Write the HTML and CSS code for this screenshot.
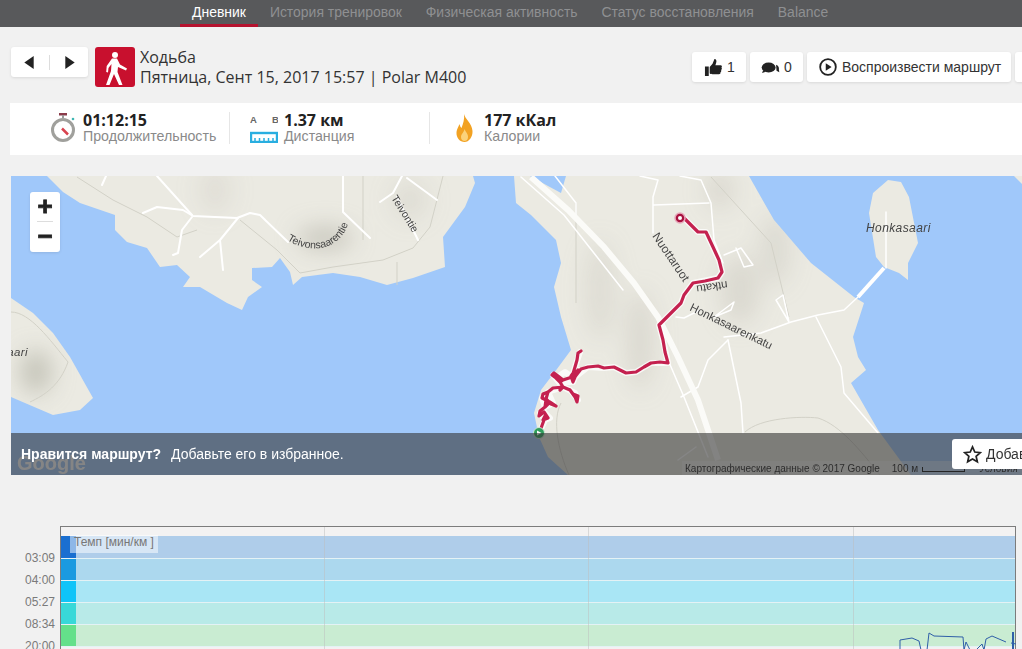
FILE: index.html
```html
<!DOCTYPE html>
<html lang="ru">
<head>
<meta charset="utf-8">
<title>Ходьба</title>
<link rel="stylesheet" href="styles.css">
</head>
<body>
<nav class="tabs">
  <a class="tab active">Дневник</a>
  <a class="tab">История тренировок</a>
  <a class="tab">Физическая активность</a>
  <a class="tab">Статус восстановления</a>
  <a class="tab">Balance</a>
</nav>

<header class="head">
  <div class="pager card">
    <svg class="pager-ico" viewBox="0 0 12 16"><path d="M11 1v14L1 8z"/></svg>
    <span class="pager-sep"></span>
    <svg class="pager-ico" viewBox="0 0 12 16"><path d="M1 1v14l10-7z"/></svg>
  </div>
  <div class="sport">
    <svg viewBox="0 0 40 40" width="40" height="40">
      <circle cx="20" cy="8" r="3" fill="#fff"/>
      <path fill="#fff" d="M17 11.500h5l3 6 7 4-1 2-8-3.500-.5 5 5 13h-3.500l-5-11-4.500 11h-3.500l5-14 .5-7-3 4-.5 4.500-1.800-.5.5-6z"/>
    </svg>
  </div>
  <div class="title">
    <div class="title-main">Ходьба</div>
    <div class="title-sub">Пятница, Сент 15, 2017 15:57 | Polar M400</div>
  </div>
  <div class="actions">
    <button class="card btn btn-like">
      <svg viewBox="0 0 20 20" width="19" height="19"><path fill="#222" d="M1 9h4v10H1zM6 9.500l3-3.500 2-5c2 0 2.500 2 1.800 4l-.8 2.500h5.500c1.500 0 1.800 2 .8 2.600.8.800.6 2-.3 2.500.5 1 .1 2-.7 2.400.3 1.200-.4 2-1.500 2H9c-1.500 0-3-.5-3-1z"/></svg>
      <span>1</span>
    </button>
    <button class="card btn btn-comment">
      <svg viewBox="0 0 20 14" width="19" height="13"><ellipse cx="8" cy="7" rx="7.500" ry="5.500" fill="#222"/><path fill="#222" d="M2 10l-1 3 4-1.500zM16 4c2.500 1 3.500 3 3 5l.5 3-3-1.500z"/></svg>
      <span>0</span>
    </button>
    <button class="card btn btn-play">
      <svg viewBox="0 0 20 20" width="18" height="18"><circle cx="10" cy="10" r="8.700" fill="none" stroke="#222" stroke-width="2"/><path fill="#222" d="M7.500 5.800v8.400L14 10z"/></svg>
      <span>Воспроизвести маршрут</span>
    </button>
    <button class="card btn btn-more"></button>
  </div>
</header>

<section class="summary">
  <div class="stat">
    <svg class="stat-ico" viewBox="0 0 28 30" width="28" height="30">
      <rect x="9" y="0" width="8" height="2.500" fill="#8a3b4a"/>
      <rect x="12" y="2" width="2" height="3" fill="#9a9a9a"/>
      <circle cx="13" cy="17" r="10.500" fill="#fff" stroke="#a0a09c" stroke-width="3"/>
      <path d="M12 15.500l6 6" stroke="#d8434e" stroke-width="2.500"/>
      <circle cx="23" cy="6" r="1.300" fill="#3fb6b2"/>
    </svg>
    <div><div class="stat-val">01:12:15</div><div class="stat-lbl">Продолжительность</div></div>
  </div>
  <div class="stat">
    <svg class="stat-ico" viewBox="0 0 28 30" width="28" height="30">
      <text x="0" y="10" class="ab">A</text>
      <text x="22" y="10" class="ab">B</text>
      <rect x="1" y="20" width="26" height="9" fill="#fff" stroke="#29aee0" stroke-width="2.400"/>
      <path d="M5 29v-4M9.500 29v-4M14 29v-4M18.500 29v-4M23 29v-4" stroke="#29aee0" stroke-width="1.500"/>
    </svg>
    <div><div class="stat-val">1.37 км</div><div class="stat-lbl">Дистанция</div></div>
  </div>
  <div class="stat">
    <svg class="stat-ico" viewBox="0 0 28 30" width="28" height="30">
      <path fill="#f2a223" d="M13 1c1 5 8 9 8.500 17 .3 6-3.500 11-8 11s-8.500-4-8-10c.3-3 2-5 3-8 .5 2 1 3 2 4 1.500-4 3.200-9 2.500-14z"/>
      <path fill="#fbd27a" d="M13.500 16c1 3 3.500 4.500 3.500 8 0 2.500-1.500 4-3.500 4s-3.500-1.500-3.500-4c0-3 3-4.500 3.500-8z"/>
    </svg>
    <div><div class="stat-val">177 кКал</div><div class="stat-lbl">Калории</div></div>
  </div>
</section>

<section class="map">
  <svg class="map-art" viewBox="11 176 1011 299" width="1011" height="299">
    <defs>
      <filter id="blur" x="-60%" y="-60%" width="220%" height="220%"><feGaussianBlur stdDeviation="11"/></filter>
      <clipPath id="landclip">
        <path d="M47 176L63 192 80 203 115 215 115 230 127 242 147 248 160 267 177 265 190 277 183 287 200 287 227 303 242 310 248 297 262 287 252 280 252 268 272 267 280 258 290 272 293 285 302 277 333 273 360 277 387 285 413 278 445 267 443 237 465 207 475 183 473 176Z"/>
        <path d="M11 298L33 313 53 333 70 357 93 398 80 410 53 415 11 397Z"/>
        <path d="M514 176L516 203 531 215 556 240 561 263 554 287 561 317 571 350 554 373 541 390 534 413 539 437 548 457 568 475H911L878 430 851 383 866 370 858 357 853 337 864 303 854 297 811 263 774 220 749 176Z"/>
      </clipPath>
    </defs>
    <rect x="11" y="176" width="1011" height="299" fill="#a0c8fa"/>
    <g fill="#ebeae2">
      <path d="M47 176L63 192 80 203 115 215 115 230 127 242 147 248 160 267 177 265 190 277 183 287 200 287 227 303 242 310 248 297 262 287 252 280 252 268 272 267 280 258 290 272 293 285 302 277 333 273 360 277 387 285 413 278 445 267 443 237 465 207 475 183 473 176Z"/>
      <path d="M11 298L33 313 53 333 70 357 93 398 80 410 53 415 11 397Z"/>
      <path d="M514 176L516 203 531 215 556 240 561 263 554 287 561 317 571 350 554 373 541 390 534 413 539 437 548 457 568 475H911L878 430 851 383 866 370 858 357 853 337 864 303 854 297 811 263 774 220 749 176Z"/>
      <path d="M888 180L873 193 869 213 876 257 884 267 899 273 908 280 908 263 918 243 909 197 901 182Z"/>
      <path d="M1014 176H1022V184Z"/>
    </g>
    <path d="M530 176H566L561 193 548 186Z" fill="#a0c8fa"/>
    <g clip-path="url(#landclip)">
      <g filter="url(#blur)" fill="#c2c1b6">
        <ellipse cx="36" cy="372" rx="16" ry="22" opacity=".9"/>
        <ellipse cx="325" cy="238" rx="28" ry="12" opacity=".8"/>
        <ellipse cx="215" cy="190" rx="16" ry="24" opacity=".25"/>
        <ellipse cx="410" cy="200" rx="18" ry="20" opacity=".3"/>
        <ellipse cx="640" cy="340" rx="14" ry="50" opacity=".4"/>
        <ellipse cx="600" cy="290" rx="16" ry="50" opacity=".3"/>
        <ellipse cx="740" cy="290" rx="20" ry="35" opacity=".4"/>
        <ellipse cx="775" cy="250" rx="16" ry="36" opacity=".35"/>
        <ellipse cx="720" cy="190" rx="14" ry="20" opacity=".4"/>
      </g>
    </g>
    <g class="thin">
      <path d="M77 177L113 200 147 217 177 237 197 230"/>
      <path d="M240 220L277 250 300 273 333 267 383 260 413 248 430 227 443 176"/>
      <path d="M363 176V240M397 262V285"/>
      <path d="M11 312C30 312 50 340 68 362 60 385 45 395 30 402"/>
      <path d="M576 203V303M711 177L771 243 789 317"/>
      <path d="M561 403C552 420 558 450 569 475"/>
      <path d="M745 432C760 418 800 416 818 418 840 425 860 450 880 475"/>
    </g>
    <g class="road">
      <path d="M143 213L157 207 183 210 193 216 237 218 250 213 260 215 288 242"/>
      <path d="M157 176L192 215M192 217L182 230 178 253 173 255"/>
      <path d="M238 218L220 240 200 257M220 240L223 270"/>
      <path d="M343 176V212L370 238M402 176L393 193 380 202M407 178L437 200M397 197L418 240M106 176L102 185"/>
    </g>
    <g class="road road-sm">
      <path d="M521 177L564 215 623 290"/>
      <path d="M658 180L653 197V233M654 205L709 203M640 176L658 180M680 176L701 180 711 203 714 240 723 263"/>
      <path d="M724 255L741 248 753 265 744 267 736 248"/>
      <path d="M676 317L684 318 700 310M714 317L734 302 731 310 714 317"/>
      <path d="M789 322L776 300 783 295 789 322"/>
      <path d="M724 337L761 333 791 322 818 315 844 310 858 297"/>
      <path d="M886 268V212"/>
      <path d="M728 340L708 360 698 387 681 397"/>
      <path d="M728 340L741 403 743 433"/>
      <path d="M816 317L841 367 844 393 878 433"/>
      <path d="M668 360L684 397 708 457"/>
      <path d="M678 460L696 447"/>
      <path d="M555 176L576 203 576 215"/>
    </g>
    <path class="causeway" d="M858 297L884 268"/>
    <path class="highway" d="M531 177L568 210 604 247 634 283 658 317 678 357 698 400 718 460"/>
    <g class="lbl">
      <path id="teiv" d="M287 240C312 256 346 250 350 214" fill="none"/>
      <text font-size="10.500"><textPath href="#teiv">Teivonsaarentie</textPath></text>
      <text transform="translate(391 198) rotate(58)" font-size="10.500">Teivontie</text>
      <text transform="translate(652 236) rotate(56)" font-size="12">Nuottaruot</text>
      <text transform="translate(727 281) rotate(172)" font-size="11.500">ntkatu</text>
      <text transform="translate(689 310) rotate(26)" font-size="11.500">Honkasaarenkatu</text>
      <text x="866" y="232" font-size="12" font-style="italic" letter-spacing=".4">Honkasaari</text>
      <text x="28" y="356" font-size="11.500" font-style="italic" text-anchor="end" letter-spacing=".4">nsaari</text>
    </g>
    <path class="route-halo" d="M684 218L698 232 706 232 719 260 722 272 718 278 693 283 684 295 681 303 659 325 663 340 668 363 651 363 636 372 626 373 614 367 604 368 588 367 574 378M580 352L575 367 572 377 578 370 573 382 560 382 553 375 563 387 570 390 578 400 575 393 563 387 548 392 542 398 545 407 553 403 548 392M545 407L540 413 545 420 550 418 544 412M545 420L540 431M556 378L565 372 572 377"/>
    <path class="route" d="M684 218L690 224 698 232 706 232 713 247 719 260 722 272 718 278 705 281 693 283 687 291 684 295 681 303 659 325 663 340 665 352 668 363 660 362 651 363 644 367 636 372 626 373 620 370 614 367 604 368 598 366 588 367 581 369 574 378M581 351L578 353 577 360 575 367 572 377 578 370 573 382 571 376 574 372M560 382L556 378 552 375 554 373 558 376 563 380 560 382 563 387 560 390M563 387L570 390 573 394 578 396 577 402 575 397 570 390M563 380L572 377M563 387L553 388 548 392 543 394 542 398 546 400 545 407 550 402 556 406 551 404 546 399 548 392M545 407L540 411 539 416 544 412 548 418 543 420 545 416M544 420L540 431"/>
    <circle cx="680" cy="218" r="5" fill="#a8123f" stroke="#e7a8bb" stroke-width="1.500"/>
    <circle cx="680" cy="218" r="2" fill="#fff"/>
    <circle cx="539" cy="433" r="5.500" fill="#2f9e5b" stroke="#cfe5d4"/>
    <path d="M537 430.500v5l4.500-2.500z" fill="#fff"/>
  </svg>

  <div class="zoom card">
    <span class="zoom-btn">+</span>
    <span class="zoom-sep"></span>
    <span class="zoom-btn">−</span>
  </div>

  <div class="google">Google</div>
  <div class="attr">
    <span>Картографические данные © 2017 Google</span>
    <span class="attr-scale">100 м</span>
    <span class="scale-bar"></span>
    <span class="attr-terms">Условия</span>
  </div>

  <div class="promo">
    <span class="promo-q">Нравится маршрут?</span>
    <span class="promo-t">Добавьте его в избранное.</span>
    <button class="fav">
      <svg viewBox="0 0 20 20" width="19" height="19"><path fill="none" stroke="#222" stroke-width="1.800" d="M10 2l2.400 5.400 5.800.6-4.400 3.900 1.300 5.800L10 14.700l-5.100 3 1.300-5.800L1.800 8l5.800-.6z"/></svg>
      <span>Добавить</span>
    </button>
  </div>
</section>

<section class="chart">
  <div class="axis">
    <span>03:09</span><span>04:00</span><span>05:27</span><span>08:34</span><span>20:00</span>
  </div>
  <div class="plot">
    <div class="band band-1"><i></i></div>
    <div class="band band-2"><i></i></div>
    <div class="band band-3"><i></i></div>
    <div class="band band-4"><i></i></div>
    <div class="band band-5"><i></i></div>
    <span class="grid g1"></span><span class="grid g2"></span><span class="grid g3"></span>
    <span class="tag">Темп [мин/км ]</span>
    <svg class="curve" viewBox="0 0 955 130" width="955" height="130">
      <path d="M839 123V113L851 111 858 114 860 123M866 123L868 106 873 109 902 110 903 123 905 115 909 123M915 123L921 117 923 123 925 112 931 109 945 115M950 116L955 117" fill="none" stroke="#2f5fa8" stroke-width="1"/>
      <path d="M952 123V105" stroke="#2f5fa8" stroke-width="2"/>
    </svg>
  </div>
</section>
</body>
</html>
```

FILE: styles.css
```css
* { box-sizing: border-box; }
html, body { margin: 0; height: 649px; overflow: hidden; }
body { width: 1022px; background: #f1f1f1; font-family: "Liberation Sans", Arial, sans-serif; color: #222; }

.card { background: #fff; border-radius: 3px; box-shadow: 0 1px 3px rgba(0, 0, 0, .1); }

.tabs { display: flex; height: 27px; background: #58595b; padding-left: 180px; }
.tab { padding: 4px 12px 0; font-size: 13.950px; line-height: 17px; color: #8f9092; white-space: nowrap; }
.tab.active { color: #fff; border-bottom: 3px solid #b5132f; }

.head { display: flex; align-items: flex-start; padding: 20px 0 0 11px; height: 76px; width: 1022px; overflow: hidden; }
.pager { display: flex; align-items: center; justify-content: space-between; width: 77px; height: 30px; padding: 0 12px; }
.pager-ico { width: 12px; height: 15px; fill: #222; }
.pager-sep { width: 1px; height: 15px; background: #ddd; }
.sport { width: 40px; height: 40px; margin-left: 7px; background: #c8102e; border-radius: 3px; overflow: hidden; }
.sport svg { display: block; }
.title { margin-left: 5px; font-family: "Open Sans", sans-serif; font-size: 16px; line-height: 20px; color: #333; white-space: nowrap; }
.actions { display: flex; gap: 4px; margin: 5px -33px 0 auto; flex: none; }
.btn { display: flex; align-items: center; height: 30px; border: 0; padding: 0; font: 14px/1 "Liberation Sans", Arial, sans-serif; color: #333; }
.btn-like { width: 54px; padding-left: 12px; gap: 4px; }
.btn-comment { width: 53px; padding-left: 11px; gap: 4px; }
.btn-play { width: 204px; padding-left: 12px; gap: 5px; }
.btn-more { width: 40px; }

.summary { display: flex; height: 52px; margin-left: 10px; padding-left: 20px; background: #fff; }
.stat { display: flex; width: 200px; height: 32px; margin-top: 9px; padding-left: 20px; gap: 5px; border-right: 1px solid #e6e6e6; }
.stat:nth-child(2) { gap: 6px; }
.stat:nth-child(3) { border-right: 0; padding-left: 21px; }
.stat-ico { flex: none; margin-top: 1px; display: block; }
.stat-val { font-family: "Open Sans", sans-serif; font-size: 16px; font-weight: 700; line-height: 17px; color: #222; white-space: nowrap; }
.stat-lbl { font-size: 14.200px; line-height: 15px; color: #8a8a8a; white-space: nowrap; }
.ab { font: 700 9.500px "Liberation Sans", sans-serif; fill: #666; }

.map { position: relative; width: 1011px; height: 299px; margin: 21px 0 0 11px; overflow: hidden; }
.map-art { display: block; }
.thin path { fill: none; stroke: #d2d1c7; stroke-width: 1; }
.road path { fill: none; stroke: #fff; stroke-width: 2; stroke-linejoin: round; stroke-linecap: round; }
.road-sm path { stroke-width: 1.500; }
.causeway { fill: none; stroke: #fff; stroke-width: 4; }
.highway { fill: none; stroke: #fbfbf8; stroke-width: 6; }
.lbl text { font-family: "Liberation Sans", sans-serif; fill: #444; }
.route-halo { fill: none; stroke: #fff; stroke-width: 6; stroke-opacity: .75; stroke-linejoin: round; stroke-linecap: round; }
.route { fill: none; stroke: #c4214f; stroke-width: 3.200; stroke-linejoin: round; stroke-linecap: round; }

.zoom { position: absolute; left: 19px; top: 16px; width: 30px; height: 60px; display: flex; flex-direction: column; align-items: center; }
.zoom-btn { height: 29px; font: 700 26px/29px "Liberation Sans", sans-serif; color: #222; -webkit-text-stroke: .8px #222; }
.zoom-sep { width: 16px; height: 1px; background: #ddd; }

.google { position: absolute; left: 6px; top: 275px; font: 700 20px/24px "Liberation Sans", sans-serif; color: #fff; }
.attr { position: absolute; right: 0; bottom: 0; width: 340px; height: 14px; padding-left: 3px; display: flex; align-items: center; background: rgba(255, 255, 255, .4); font-size: 10px; color: #1c1c1c; white-space: nowrap; }
.attr-scale { margin-left: 12px; }
.scale-bar { width: 43px; height: 5px; margin: 2px 0 0 4px; border: 1px solid #111; border-top: 0; }
.attr-terms { margin-left: 14px; }

.promo { position: absolute; left: 0; right: 0; bottom: 0; height: 42px; background: rgba(51, 51, 51, .6); display: flex; align-items: center; padding-left: 10px; font-size: 14px; color: #fff; }
.promo-q { font-weight: 700; }
.promo-t { margin-left: 10px; }
.fav { position: absolute; left: 941px; top: 6px; width: 120px; height: 30px; display: flex; align-items: center; gap: 4px; padding: 0 0 0 11px; border: 0; border-radius: 3px; background: #fff; font: 14px "Liberation Sans", sans-serif; color: #333; }

.chart { display: flex; margin-top: 51px; width: 1022px; }
.axis { display: flex; flex-direction: column; width: 60px; padding: 21px 5px 0 0; text-align: right; font-size: 12px; color: #7a7a7a; }
.axis span { height: 22px; line-height: 22px; }
.plot { position: relative; width: 956px; height: 140px; padding-top: 9px; background: #f3f2f2; border: 1px solid #7c7c7c; border-bottom: 0; }
.band { display: flex; height: 22px; border-bottom: 1px solid #e4f2f5; }
.band i { display: block; width: 15px; height: 100%; }
.band-1 { height: 23px; background: #afcdea; } .band-1 i { background: #1a6fd0; }
.band-2 { background: #acd8ee; } .band-2 i { background: #1a9ae0; }
.band-3 { background: #a9e6f5; } .band-3 i { background: #0fc4f8; }
.band-4 { background: #b8eae8; } .band-4 i { background: #38d8d8; }
.band-5 { background: #c9ecd2; } .band-5 i { background: #64e08a; }
.grid { position: absolute; top: 0; bottom: 0; width: 1px; background: rgba(190, 190, 190, .5); }
.g1 { left: 263px; } .g2 { left: 527px; } .g3 { left: 792px; }
.tag { position: absolute; left: 9px; top: 8px; height: 18px; padding: 0 4px; font-size: 12px; line-height: 14px; color: #777; background: rgba(255, 255, 255, .5); white-space: nowrap; }
.curve { position: absolute; left: 0; top: 0; }
```
